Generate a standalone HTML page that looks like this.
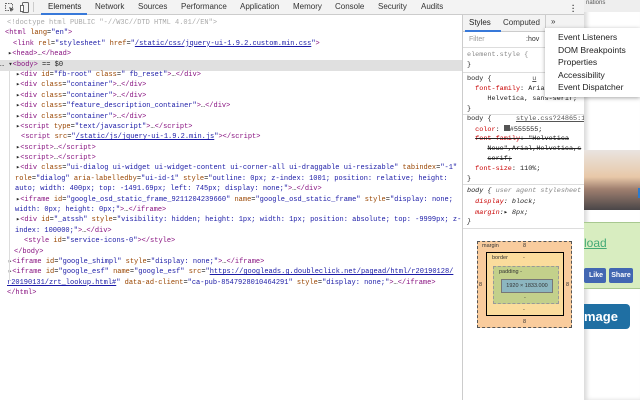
<!DOCTYPE html>
<html><head><meta charset="utf-8"><style>
*{margin:0;padding:0;box-sizing:border-box}
body{width:640px;height:400px;overflow:hidden;background:#fff;position:relative;font-family:"Liberation Sans",sans-serif}
.tabs{position:absolute;left:0;top:0;width:584px;height:15px;background:#f3f3f3;border-bottom:1px solid #ccc;font-size:8px;color:#333}
.tabs span{position:absolute;top:2px}
.tree{position:absolute;left:0;top:18px;width:462px;font-family:"Liberation Mono",monospace;font-size:7px;line-height:10.4px;color:#222;overflow:hidden}
.tree div{height:10.4px;white-space:pre}
.d0{padding-left:7px}.h{padding-left:5px}.k{padding-left:13px}.a1{padding-left:8px}.a2{padding-left:16px}.n2{padding-left:21px}.c2{padding-left:15px}.c1{padding-left:7px}.s3{padding-left:24px}.b1{padding-left:14px}
.t{color:#881280}.a{color:#994500}.v{color:#1a1aa6}.l{color:#1a1aa6;text-decoration:underline}.g{color:#aaa}
.side{position:absolute;left:462px;top:15px;width:122px;height:385px;border-left:1px solid #ccc;background:#fff;font-family:"Liberation Mono",monospace;font-size:6.8px;color:#222;overflow:hidden}
.sl{position:absolute;left:4px;white-space:pre}
.p{color:#c80000}
.page{position:absolute;left:584px;top:0;width:56px;height:400px;background:#fff;box-shadow:inset 3px 0 4px rgba(0,0,0,.15)}
.menu{position:absolute;left:545px;top:28px;width:95px;height:69px;background:#fff;box-shadow:0 1px 4px rgba(0,0,0,.35);font-size:8.6px;color:#222}
.menu div{position:absolute;left:13px}
</style></head><body>
<div class="tabs">
<svg style="position:absolute;left:5px;top:3px" width="10" height="10"><rect x="0.5" y="0.5" width="7" height="7" fill="none" stroke="#666" stroke-dasharray="1.5 1"/><path d="M4 4l5 2-2 1-1 2z" fill="#555"/></svg>
<svg style="position:absolute;left:20px;top:2px" width="10" height="11"><rect x="2.5" y="0.5" width="6" height="10" rx="1" fill="none" stroke="#666"/><rect x="0.5" y="3.5" width="3" height="6" fill="#fff" stroke="#666"/></svg>
<div style="position:absolute;left:33px;top:2px;width:1px;height:10px;background:#ccc"></div>
<span style="left:48px;color:#222">Elements</span>
<div style="position:absolute;left:41px;top:13px;width:46px;height:2px;background:#3879d9"></div>
<span style="left:95px">Network</span><span style="left:138px">Sources</span><span style="left:181px">Performance</span><span style="left:240px">Application</span><span style="left:293px">Memory</span><span style="left:335px">Console</span><span style="left:378px">Security</span><span style="left:421px">Audits</span>
<span style="left:572px;font-weight:bold;line-height:3px;top:2px">.<br>.<br>.</span>
</div>
<div style="position:absolute;left:0;top:60px;width:462px;height:11px;background:#e0e0e0"></div>
<div class="tree">
<div class="d0 g">&lt;!doctype html PUBLIC "-//W3C//DTD HTML 4.01//EN"&gt;</div>
<div class="h"><span class="t">&lt;html</span> <span class="a">lang</span>=<span class="v">"en"</span><span class="t">&gt;</span></div>
<div class="k"><span class="t">&lt;link</span> <span class="a">rel</span>=<span class="v">"stylesheet"</span> <span class="a">href</span>=<span class="v">"</span><span class="l">/static/css/jquery-ui-1.9.2.custom.min.css</span><span class="v">"</span><span class="t">&gt;</span></div>
<div class="a1">▸<span class="t">&lt;head&gt;</span>…<span class="t">&lt;/head&gt;</span></div>
<div>… ▾<span class="t">&lt;body&gt;</span> == $0</div>
<div class="a2">▸<span class="t">&lt;div</span> <span class="a">id</span>=<span class="v">"fb-root"</span> <span class="a">class</span>=<span class="v">" fb_reset"</span><span class="t">&gt;</span>…<span class="t">&lt;/div&gt;</span></div>
<div class="a2">▸<span class="t">&lt;div</span> <span class="a">class</span>=<span class="v">"container"</span><span class="t">&gt;</span>…<span class="t">&lt;/div&gt;</span></div>
<div class="a2">▸<span class="t">&lt;div</span> <span class="a">class</span>=<span class="v">"container"</span><span class="t">&gt;</span>…<span class="t">&lt;/div&gt;</span></div>
<div class="a2">▸<span class="t">&lt;div</span> <span class="a">class</span>=<span class="v">"feature_description_container"</span><span class="t">&gt;</span>…<span class="t">&lt;/div&gt;</span></div>
<div class="a2">▸<span class="t">&lt;div</span> <span class="a">class</span>=<span class="v">"container"</span><span class="t">&gt;</span>…<span class="t">&lt;/div&gt;</span></div>
<div class="a2">▸<span class="t">&lt;script</span> <span class="a">type</span>=<span class="v">"text/javascript"</span><span class="t">&gt;</span>…<span class="t">&lt;/script&gt;</span></div>
<div class="n2"><span class="t">&lt;script</span> <span class="a">src</span>=<span class="v">"</span><span class="l">/static/js/jquery-ui-1.9.2.min.js</span><span class="v">"</span><span class="t">&gt;&lt;/script&gt;</span></div>
<div class="a2">▸<span class="t">&lt;script&gt;</span>…<span class="t">&lt;/script&gt;</span></div>
<div class="a2">▸<span class="t">&lt;script&gt;</span>…<span class="t">&lt;/script&gt;</span></div>
<div class="a2">▸<span class="t">&lt;div</span> <span class="a">class</span>=<span class="v">"ui-dialog ui-widget ui-widget-content ui-corner-all ui-draggable ui-resizable"</span> <span class="a">tabindex</span>=<span class="v">"-1"</span></div>
<div class="c2"><span class="a">role</span>=<span class="v">"dialog"</span> <span class="a">aria-labelledby</span>=<span class="v">"ui-id-1"</span> <span class="a">style</span>=<span class="v">"outline: 0px; z-index: 1001; position: relative; height:</span></div>
<div class="c2"><span class="v">auto; width: 400px; top: -1491.69px; left: 745px; display: none;"</span><span class="t">&gt;</span>…<span class="t">&lt;/div&gt;</span></div>
<div class="a2">▸<span class="t">&lt;iframe</span> <span class="a">id</span>=<span class="v">"google_osd_static_frame_9211204239660"</span> <span class="a">name</span>=<span class="v">"google_osd_static_frame"</span> <span class="a">style</span>=<span class="v">"display: none;</span></div>
<div class="c2"><span class="v">width: 0px; height: 0px;"</span><span class="t">&gt;</span>…<span class="t">&lt;/iframe&gt;</span></div>
<div class="a2">▸<span class="t">&lt;div</span> <span class="a">id</span>=<span class="v">"_atssh"</span> <span class="a">style</span>=<span class="v">"visibility: hidden; height: 1px; width: 1px; position: absolute; top: -9999px; z-</span></div>
<div class="c2"><span class="v">index: 100000;"</span><span class="t">&gt;</span>…<span class="t">&lt;/div&gt;</span></div>
<div class="s3"><span class="t">&lt;style</span> <span class="a">id</span>=<span class="v">"service-icons-0"</span><span class="t">&gt;&lt;/style&gt;</span></div>
<div class="b1"><span class="t">&lt;/body&gt;</span></div>
<div class="a1">▸<span class="t">&lt;iframe</span> <span class="a">id</span>=<span class="v">"google_shimpl"</span> <span class="a">style</span>=<span class="v">"display: none;"</span><span class="t">&gt;</span>…<span class="t">&lt;/iframe&gt;</span></div>
<div class="a1">▸<span class="t">&lt;iframe</span> <span class="a">id</span>=<span class="v">"google_esf"</span> <span class="a">name</span>=<span class="v">"google_esf"</span> <span class="a">src</span>=<span class="v">"</span><span class="l">https://googleads.g.doubleclick.net/pagead/html/r20190128/</span></div>
<div class="c1"><span class="l">r20190131/zrt_lookup.html#</span><span class="v">"</span> <span class="a">data-ad-client</span>=<span class="v">"ca-pub-8547928010464291"</span> <span class="a">style</span>=<span class="v">"display: none;"</span><span class="t">&gt;</span>…<span class="t">&lt;/iframe&gt;</span></div>
<div class="c1"><span class="t">&lt;/html&gt;</span></div>
</div>
<div style="position:absolute;left:9px;top:71px;width:1px;height:210px;background:#ddd"></div>
<div class="side">
<div style="position:absolute;left:0;top:0;width:122px;height:17px;background:#f3f3f3;border-bottom:1px solid #ccc;font-family:'Liberation Sans',sans-serif;font-size:8px;color:#333">
<span style="position:absolute;left:6px;top:3px;color:#222">Styles</span>
<div style="position:absolute;left:2px;top:15px;width:36px;height:2px;background:#3879d9"></div>
<span style="position:absolute;left:40px;top:3px">Computed</span>
<span style="position:absolute;left:88px;top:2px">»</span>
<div style="position:absolute;left:82px;top:0;width:1px;height:17px;background:#ccc"></div>
</div>
<div style="position:absolute;left:0;top:17px;width:122px;height:16px;border-bottom:1px solid #ddd;font-family:'Liberation Sans',sans-serif;font-size:7px;color:#999">
<span style="position:absolute;left:6px;top:4px">Filter</span><span style="position:absolute;left:63px;top:4px;color:#333">:hov</span></div>
<div class="sl" style="top:36px;color:#888">element.style {</div>
<div class="sl" style="top:46px">}</div>
<div style="position:absolute;left:0;top:57px;width:122px;height:1px;background:#ddd"></div>
<div class="sl" style="top:60px">body {          <u style="color:#555">u</u></div>
<div class="sl" style="top:70px">  <span class="p">font-family</span>: Arial,</div>
<div class="sl" style="top:80px">     Helvetica, sans-serif;</div>
<div class="sl" style="top:90px">}</div>
<div style="position:absolute;left:0;top:99px;width:122px;height:1px;background:#ddd"></div>
<div class="sl" style="top:100px">body {      <u style="color:#555">style.css?24865:1</u></div>
<div class="sl" style="top:110px">  <span class="p">color</span>: <span style="display:inline-block;width:6px;height:6px;background:#555"></span>#555555;</div>
<div class="sl" style="top:120px">  <s><span class="p">font-family</span>: "Helvetica</s></div>
<div class="sl" style="top:130px">     <s>Neue",Arial,Helvetica,s</s></div>
<div class="sl" style="top:140px">     <s>serif;</s></div>
<div class="sl" style="top:150px">  <span class="p">font-size</span>: 110%;</div>
<div class="sl" style="top:160px">}</div>
<div style="position:absolute;left:0;top:169px;width:122px;height:1px;background:#ddd"></div>
<div class="sl" style="top:172px;font-style:italic">body { <span style="color:#888">user agent stylesheet</span></div>
<div class="sl" style="top:183px;font-style:italic">  <span class="p">display</span>: block;</div>
<div class="sl" style="top:193px;font-style:italic">  <span class="p">margin</span>:▸ 8px;</div>
<div class="sl" style="top:203px;font-style:italic">}</div>
<div style="position:absolute;left:0;top:213px;width:122px;height:1px;background:#ddd"></div>
<div style="position:absolute;left:14px;top:226px;width:95px;height:87px;background:#f9cc9d;border:1px dashed #555;font-family:'Liberation Sans',sans-serif;font-size:5.5px;color:#333">
<span style="position:absolute;left:4px;top:1px">margin</span><span style="position:absolute;left:45px;top:1px">8</span>
<span style="position:absolute;left:1px;top:40px">8</span><span style="position:absolute;right:2px;top:40px">8</span><span style="position:absolute;left:45px;bottom:2px">8</span>
<div style="position:absolute;left:8px;top:10px;width:78px;height:64px;background:#fbdc9c;border:1px solid #000">
<span style="position:absolute;left:5px;top:2px">border</span><span style="position:absolute;left:36px;top:2px">-</span>
<span style="position:absolute;left:36px;bottom:2px">-</span>
<div style="position:absolute;left:6px;top:13px;width:66px;height:38px;background:#c3d08b;border:1px dashed #999">
<span style="position:absolute;left:5px;top:2px">padding -</span>
<span style="position:absolute;left:30px;bottom:2px">-</span>
<div style="position:absolute;left:7px;top:12px;width:52px;height:14px;background:#8cb6c0;border:1px solid #777;text-align:center;line-height:12px">1920 × 1833.000</div>
</div></div></div>
</div>
<div class="page">
<div style="position:absolute;left:0;top:0;width:56px;height:12px;background:#eee;font-size:6px;color:#555;padding-left:2px">nations</div>
<div style="position:absolute;left:0;top:150px;width:56px;height:60px;background:linear-gradient(#e9e4e0,#e8c8a8 45%,#a08070 65%,#4a4648)"></div>
<div style="position:absolute;left:54px;top:188px;width:2px;height:10px;background:#2a7bd0"></div>
<div style="position:absolute;left:0;top:222px;width:56px;height:67px;background:#d8edc0;border-top:1px solid #a8c890;border-bottom:1px solid #a8c890"></div>
<div style="position:absolute;left:0;top:236px;font-size:12px;text-decoration:underline;color:#4a7">load</div>
<div style="position:absolute;left:0;top:268px;width:22px;height:15px;background:#4267b2;border-radius:2px;color:#fff;font-size:7px;font-weight:bold;line-height:15px;text-align:right;padding-right:3px">Like</div>
<div style="position:absolute;left:25px;top:268px;width:24px;height:15px;background:#4267b2;border-radius:2px;color:#fff;font-size:7px;font-weight:bold;line-height:15px;text-align:center">Share</div>
<div style="position:absolute;left:0;top:304px;width:46px;height:25px;background:#1f6fa3;border-radius:0 4px 4px 0;color:#fff;font-size:13px;font-weight:bold;line-height:25px">mage</div>
</div>
<div class="menu">
<div style="top:4px">Event Listeners</div>
<div style="top:17px">DOM Breakpoints</div>
<div style="top:29px">Properties</div>
<div style="top:42px">Accessibility</div>
<div style="top:54px">Event Dispatcher</div>
</div>
</body></html>
